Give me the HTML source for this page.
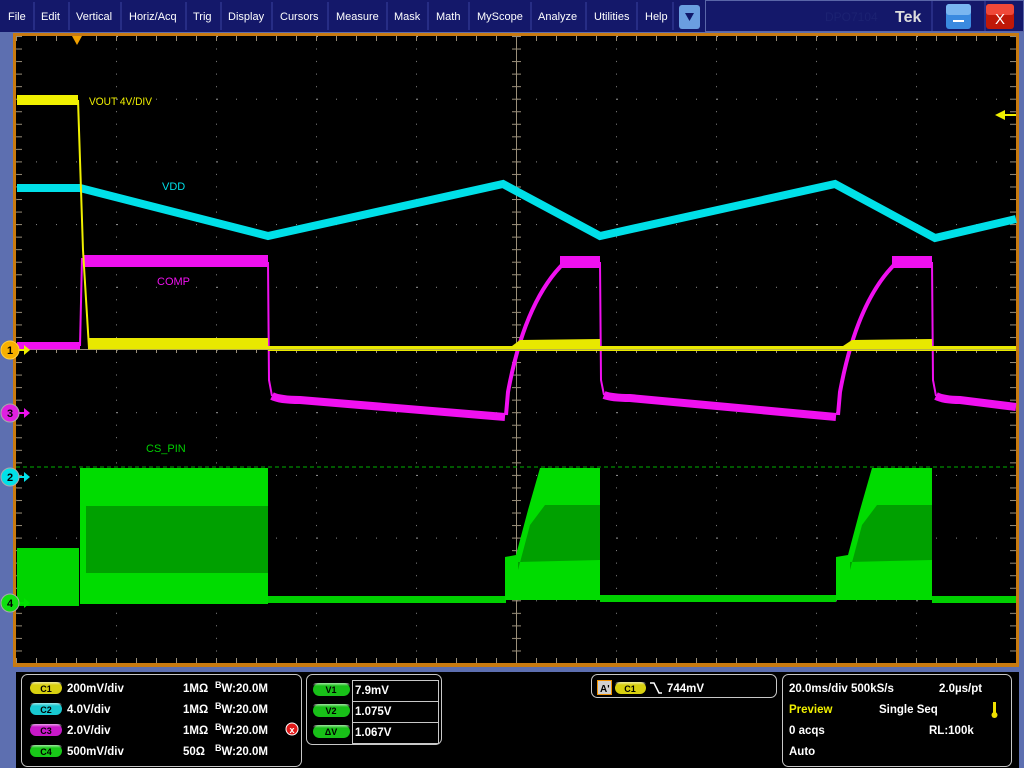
<!DOCTYPE html>
<html><head><meta charset="utf-8"><style>
html,body{margin:0;padding:0;background:#000;width:1024px;height:768px;overflow:hidden}
svg{display:block}
.m{font-family:"Liberation Sans",sans-serif;font-size:11px;fill:#fff}
.b{font-family:"Liberation Sans",sans-serif;font-size:11.5px;font-weight:bold;fill:#fff}
.lab{font-family:"Liberation Sans",sans-serif;font-size:11px}
.pl{font-family:"Liberation Sans",sans-serif;font-size:9px;font-weight:bold;fill:#000}
</style></head><body>
<svg width="1024" height="768" viewBox="0 0 1024 768" xmlns="http://www.w3.org/2000/svg">
<defs>
<pattern id="dots" x="16" y="36" width="100" height="62.7" patternUnits="userSpaceOnUse">
<rect x="0" y="12.5" width="1" height="1" fill="#888"/><rect x="0" y="25" width="1" height="1" fill="#888"/><rect x="0" y="37.6" width="1" height="1" fill="#888"/><rect x="0" y="50.2" width="1" height="1" fill="#888"/>
<rect x="0" y="0" width="2" height="1" fill="#999"/><rect x="20" y="0" width="1" height="1" fill="#888"/><rect x="40" y="0" width="1" height="1" fill="#888"/><rect x="60" y="0" width="1" height="1" fill="#888"/><rect x="80" y="0" width="1" height="1" fill="#888"/>
</pattern>
<pattern id="hticks" x="16" y="0" width="20" height="10" patternUnits="userSpaceOnUse"><rect x="0" y="0" width="1" height="10" fill="#9a8f7a"/></pattern>
<pattern id="vticks" x="0" y="36" width="10" height="12.54" patternUnits="userSpaceOnUse"><rect x="0" y="0" width="10" height="1" fill="#9a8f7a"/></pattern>
<linearGradient id="pill" x1="0" y1="0" x2="0" y2="1"><stop offset="0" stop-color="#fff" stop-opacity=".6"/><stop offset=".5" stop-color="#fff" stop-opacity="0"/></linearGradient>
</defs>
<rect x="0" y="0" width="1024" height="768" fill="#000"/>
<rect x="0" y="32" width="1024" height="640" fill="#5d6fb0"/>
<rect x="0" y="32" width="16" height="736" fill="#5d6fb0"/>
<rect x="1019" y="32" width="5" height="736" fill="#5d6fb0"/>
<rect x="16" y="672" width="1003" height="96" fill="#000"/>
<rect x="13" y="33" width="1006" height="634" fill="#c87a10"/>
<rect x="16" y="36" width="1000" height="627" fill="#000"/>
<rect x="16" y="36" width="1000" height="627" fill="url(#dots)"/>
<rect x="516" y="36" width="1" height="627" fill="#9a8f7a"/>
<rect x="16" y="349" width="1000" height="1" fill="#9a8f7a"/>
<rect x="16" y="36" width="1000" height="5" fill="url(#hticks)"/>
<rect x="16" y="658" width="1000" height="5" fill="url(#hticks)"/>
<rect x="16" y="346" width="1000" height="7" fill="url(#hticks)"/>
<rect x="17" y="36" width="5" height="627" fill="url(#vticks)"/>
<rect x="1010" y="36" width="6" height="627" fill="url(#vticks)"/>
<rect x="512" y="36" width="9" height="627" fill="url(#vticks)"/>
<g>
<polygon fill="#00d400" points="17,548 79,548 79,606 17,606"/>
<polygon fill="#00dc00" points="80,468 268,468 268,604 80,604"/>
<rect x="86" y="506" width="182" height="67" fill="#00a000"/>
<rect x="268" y="596" width="238" height="7" fill="#00d000"/>
<polygon fill="#00dc00" points="505,557 516,555 528,510 540,468 600,468 600,600 505,600"/>
<polygon fill="#00a000" points="518,570 530,525 545,505 600,505 600,560 518,562"/>
<rect x="600" y="595" width="236" height="7" fill="#00d000"/>
<polygon fill="#00dc00" points="836,557 848,555 860,510 872,468 932,468 932,600 836,600"/>
<polygon fill="#00a000" points="850,570 862,525 877,505 932,505 932,560 850,562"/>
<rect x="932" y="596" width="84" height="7" fill="#00d000"/>
<line x1="16" y1="467" x2="1016" y2="467" stroke="#00b000" stroke-width="1" stroke-dasharray="4,3"/>
</g>
<polyline fill="none" stroke="#00e0e8" stroke-width="8" points="17,188 80,188 268,236 503,184 600,236 835,184 935,238 1016,219"/>
<g fill="none" stroke="#f010f0">
<polyline stroke-width="8" points="17,346 80,346"/>
<polyline stroke-width="2" points="80,346 82,258"/>
<polyline stroke-width="2" points="268,262 269,380 272,396"/>
<polyline stroke-width="2" points="600,262 601,380 604,395"/>
<polyline stroke-width="2" points="932,262 933,380 936,396"/>
<path stroke-width="8" d="M272,396 Q280,400 300,400 L505,417"/>
<path stroke-width="8" d="M604,395 Q612,398 630,398 L836,417"/>
<path stroke-width="8" d="M936,396 Q944,400 960,400 L1016,407"/>
<path stroke-width="4" d="M506,415 L508,392 Q525,300 565,262"/>
<path stroke-width="4" d="M838,415 L840,392 Q857,300 897,262"/>
</g>
<rect x="84" y="255" width="184" height="12" fill="#f010f0"/>
<rect x="560" y="256" width="40" height="12" fill="#f010f0"/>
<rect x="892" y="256" width="40" height="12" fill="#f010f0"/>
<rect x="17" y="95" width="61" height="10" fill="#f0f000"/>
<polyline fill="none" stroke="#f0f000" stroke-width="2" points="78,100 83,250 89,348"/>
<rect x="88" y="338" width="180" height="12" fill="#e8e800"/>
<rect x="268" y="346" width="748" height="5" fill="#e8e800"/>
<polygon fill="#e8e800" points="512,346 520,340 600,339 600,350 512,350"/>
<polygon fill="#e8e800" points="843,346 852,340 932,339 932,350 843,350"/>
<rect x="16" y="349" width="1000" height="1" fill="#9a8f7a" opacity=".6"/>
<text x="89" y="105" class="lab" fill="#f0f000" textLength="63" lengthAdjust="spacingAndGlyphs">VOUT 4V/DIV</text>
<text x="162" y="190" class="lab" fill="#00e0e8">VDD</text>
<text x="157" y="285" class="lab" fill="#f010f0">COMP</text>
<text x="146" y="452" class="lab" fill="#00d000">CS_PIN</text>
<polygon points="72,36 82,36 77,45" fill="#f0a000"/>
<polygon points="995,115 1005,110 1005,120" fill="#f0f000"/><rect x="1003" y="114" width="13" height="2" fill="#f0f000"/>
<g font-family="Liberation Sans,sans-serif" font-size="11" font-weight="bold" text-anchor="middle">
<line x1="14" y1="350" x2="26" y2="350" stroke="#f0f000" stroke-width="2"/><polygon points="24,345 30,350 24,355" fill="#f0f000"/>
<circle cx="10" cy="350" r="9" fill="#f8b000" stroke="#ffd040"/><text x="10" y="354" fill="#000">1</text>
<line x1="14" y1="413" x2="26" y2="413" stroke="#f010f0" stroke-width="2"/><polygon points="24,408 30,413 24,418" fill="#f010f0"/>
<circle cx="10" cy="413" r="9" fill="#e020e0" stroke="#aaa"/><text x="10" y="417" fill="#000">3</text>
<line x1="14" y1="477" x2="26" y2="477" stroke="#00e0e8" stroke-width="2"/><polygon points="24,472 30,477 24,482" fill="#00e0e8"/>
<circle cx="10" cy="477" r="9" fill="#00e0e8" stroke="#aaa"/><text x="10" y="481" fill="#000">2</text>
<line x1="14" y1="603" x2="26" y2="603" stroke="#00e000" stroke-width="2"/><polygon points="24,598 30,603 24,608" fill="#00e000"/>
<circle cx="10" cy="603" r="9" fill="#10e010" stroke="#aaa"/><text x="10" y="607" fill="#000">4</text>
</g>
<rect x="0" y="0" width="1024" height="32" fill="#14186a"/>
<rect x="705.5" y="0.5" width="318" height="31" fill="#14186a" stroke="#5a66a8"/>
<g stroke="#3a42a0">
<line x1="34" y1="2" x2="34" y2="30"/><line x1="69" y1="2" x2="69" y2="30"/><line x1="121" y1="2" x2="121" y2="30"/><line x1="186" y1="2" x2="186" y2="30"/><line x1="221" y1="2" x2="221" y2="30"/><line x1="272" y1="2" x2="272" y2="30"/><line x1="328" y1="2" x2="328" y2="30"/><line x1="387" y1="2" x2="387" y2="30"/><line x1="428" y1="2" x2="428" y2="30"/><line x1="469" y1="2" x2="469" y2="30"/><line x1="531" y1="2" x2="531" y2="30"/><line x1="586" y1="2" x2="586" y2="30"/><line x1="637" y1="2" x2="637" y2="30"/><line x1="673" y1="2" x2="673" y2="30"/><line x1="932" y1="1" x2="932" y2="31"/><line x1="985" y1="1" x2="985" y2="31"/>
</g>
<g class="m">
<text x="8" y="20" class="m">File</text><text x="41" y="20" class="m">Edit</text><text x="76" y="20" class="m">Vertical</text><text x="129" y="20" class="m">Horiz/Acq</text><text x="193" y="20" class="m">Trig</text><text x="228" y="20" class="m">Display</text><text x="280" y="20" class="m">Cursors</text><text x="336" y="20" class="m">Measure</text><text x="394" y="20" class="m">Mask</text><text x="436" y="20" class="m">Math</text><text x="477" y="20" class="m">MyScope</text><text x="538" y="20" class="m">Analyze</text><text x="594" y="20" class="m">Utilities</text><text x="645" y="20" class="m">Help</text>
</g>
<rect x="679" y="5" width="21" height="24" rx="3" fill="#6a9ee0"/><polygon points="685,13 694,13 689.5,21" fill="#10186a"/>
<text x="825" y="21" font-family="Liberation Sans,sans-serif" font-size="12" fill="#1c2272">DPO7104</text>
<text x="895" y="22" font-family="Liberation Sans,sans-serif" font-size="16" font-weight="bold" fill="#ddd">Tek</text>
<rect x="946" y="4" width="25" height="25" rx="3" fill="#3a8ae0"/><rect x="946" y="4" width="25" height="11" rx="3" fill="#7ab6f0"/><rect x="953" y="20" width="11" height="2" fill="#fff"/>
<rect x="986" y="4" width="28" height="25" rx="3" fill="#c01808"/><rect x="986" y="4" width="28" height="11" rx="3" fill="#f04838"/><text x="1000" y="24" text-anchor="middle" font-family="Liberation Sans,sans-serif" font-size="15" fill="#fff">X</text>
<g fill="none" stroke="#c8c8c8" stroke-width="1">
<rect x="21.5" y="674.5" width="280" height="92" rx="6"/>
<rect x="306.5" y="674.5" width="135" height="70" rx="6"/>
<rect x="591.5" y="674.5" width="185" height="23" rx="6"/>
<rect x="782.5" y="674.5" width="229" height="92" rx="6"/>
<rect x="352.5" y="680.5" width="86" height="63"/>
<line x1="352" y1="701.5" x2="439" y2="701.5"/><line x1="352" y1="722.5" x2="439" y2="722.5"/>
</g>
<g>
<rect x="30" y="682" width="32" height="12" rx="6" fill="#d8d010"/><rect x="30" y="682" width="32" height="6" rx="3" fill="url(#pill)"/><text x="46" y="692" class="pl" text-anchor="middle">C1</text>
<rect x="30" y="703" width="32" height="12" rx="6" fill="#18c8d0"/><rect x="30" y="703" width="32" height="6" rx="3" fill="url(#pill)"/><text x="46" y="713" class="pl" text-anchor="middle">C2</text>
<rect x="30" y="724" width="32" height="12" rx="6" fill="#c818c8"/><rect x="30" y="724" width="32" height="6" rx="3" fill="url(#pill)"/><text x="46" y="734" class="pl" text-anchor="middle">C3</text>
<rect x="30" y="745" width="32" height="12" rx="6" fill="#18c818"/><rect x="30" y="745" width="32" height="6" rx="3" fill="url(#pill)"/><text x="46" y="755" class="pl" text-anchor="middle">C4</text>
</g>
<text x="67" y="692" class="b">200mV/div</text><text x="67" y="713" class="b">4.0V/div</text><text x="67" y="734" class="b">2.0V/div</text><text x="67" y="755" class="b">500mV/div</text>
<text x="183" y="692" class="b">1MΩ</text><text x="183" y="713" class="b">1MΩ</text><text x="183" y="734" class="b">1MΩ</text><text x="183" y="755" class="b">50Ω</text>
<g class="b"><text x="215" y="692" class="b"><tspan font-size="9" dy="-4">B</tspan><tspan dy="4">W:20.0M</tspan></text><text x="215" y="713" class="b"><tspan font-size="9" dy="-4">B</tspan><tspan dy="4">W:20.0M</tspan></text><text x="215" y="734" class="b"><tspan font-size="9" dy="-4">B</tspan><tspan dy="4">W:20.0M</tspan></text><text x="215" y="755" class="b"><tspan font-size="9" dy="-4">B</tspan><tspan dy="4">W:20.0M</tspan></text></g>
<circle cx="292" cy="729" r="6" fill="#e01818" stroke="#fff"/><text x="292" y="733" text-anchor="middle" font-family="Liberation Sans,sans-serif" font-size="9" font-weight="bold" fill="#fff">x</text>
<g>
<rect x="313" y="683" width="37" height="13" rx="6.5" fill="#18c018"/><rect x="313" y="683" width="37" height="6" rx="3" fill="url(#pill)"/><text x="331" y="693" class="pl" text-anchor="middle">V1</text>
<rect x="313" y="704" width="37" height="13" rx="6.5" fill="#18c018"/><rect x="313" y="704" width="37" height="6" rx="3" fill="url(#pill)"/><text x="331" y="714" class="pl" text-anchor="middle">V2</text>
<rect x="313" y="725" width="37" height="13" rx="6.5" fill="#18c018"/><rect x="313" y="725" width="37" height="6" rx="3" fill="url(#pill)"/><text x="331" y="735" class="pl" text-anchor="middle">ΔV</text>
</g>
<text x="355" y="694" class="b">7.9mV</text><text x="355" y="715" class="b">1.075V</text><text x="355" y="736" class="b">1.067V</text>
<rect x="597.5" y="680.5" width="14" height="14" fill="#d0d0d0" stroke="#f09000"/><text x="600" y="692" font-family="Liberation Sans,sans-serif" font-size="10" font-weight="bold" fill="#000">A'</text>
<rect x="615" y="682" width="31" height="12" rx="6" fill="#d8d010"/><rect x="615" y="682" width="31" height="6" rx="3" fill="url(#pill)"/><text x="630" y="692" class="pl" text-anchor="middle">C1</text>
<polyline points="650,683 654,683 659,693 662,693" fill="none" stroke="#fff" stroke-width="1.5"/>
<text x="667" y="692" class="b">744mV</text>
<text x="789" y="692" class="b">20.0ms/div 500kS/s</text><text x="939" y="692" class="b">2.0µs/pt</text>
<text x="789" y="713" class="b" style="fill:#f0f000">Preview</text><text x="879" y="713" class="b">Single Seq</text>
<rect x="993" y="702" width="3" height="12" fill="#f0e000"/><circle cx="994.5" cy="715" r="3" fill="#f0e000"/>
<text x="789" y="734" class="b">0 acqs</text><text x="929" y="734" class="b">RL:100k</text>
<text x="789" y="755" class="b">Auto</text>
</svg>
</body></html>
